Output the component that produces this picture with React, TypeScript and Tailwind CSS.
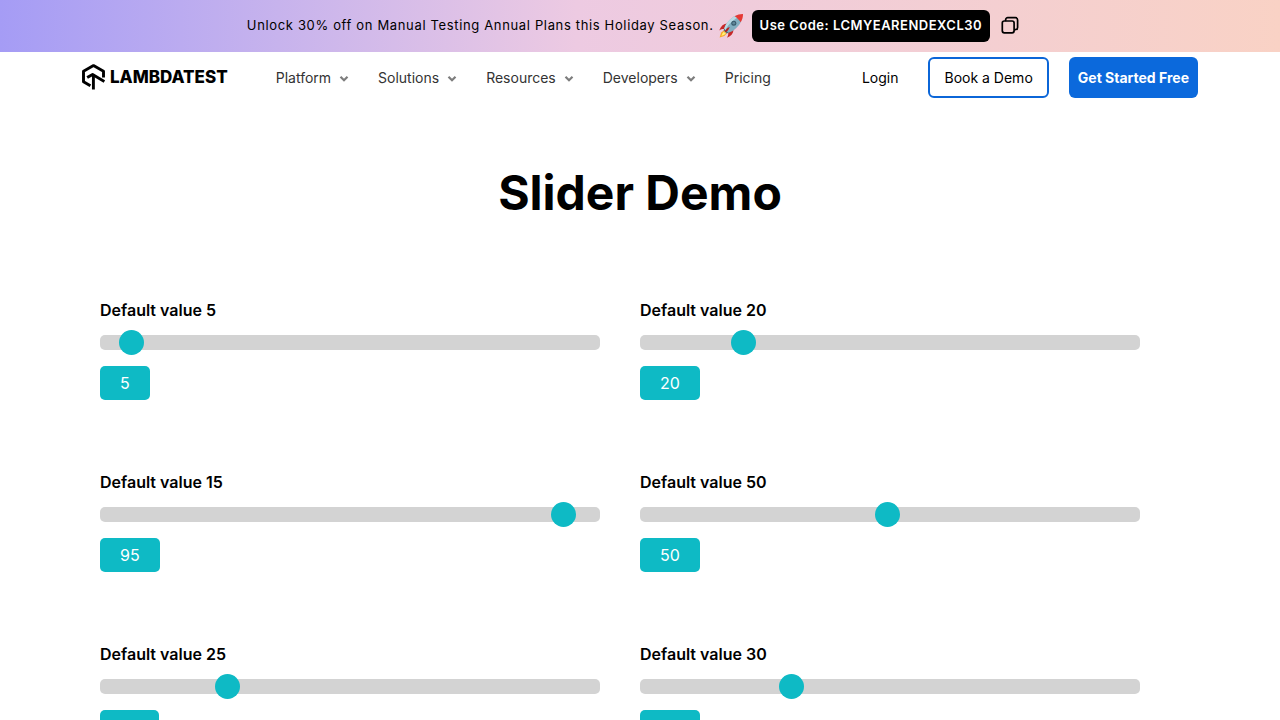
import { useId, useState } from "react";

const menus = ["Platform", "Solutions", "Resources", "Developers"];

const sliders = [
  { label: "Default value 5", initial: 5 },
  { label: "Default value 20", initial: 20 },
  { label: "Default value 15", initial: 95 },
  { label: "Default value 50", initial: 50 },
  { label: "Default value 25", initial: 25 },
  { label: "Default value 30", initial: 30 },
];

function Rocket() {
  return (
    <svg viewBox="0 0 26 26" className="ml-1 h-[26px] w-[26px]" aria-hidden="true">
      <path d="M7 16.5 3.2 19.5 1.6 24.6 6.4 23 9.8 19.2Z" fill="#f9a825" />
      <path d="M7 17.5 4.6 20 3.4 23 6.4 21.8 8.6 19.2Z" fill="#fff176" />
      <path d="M9.5 10.5C5.5 10.7 3 13 1.2 17.4 3.5 15.9 5.8 15.6 8 16.2Z" fill="#c62828" />
      <path d="M15.5 16.5C15.4 20.4 13.3 23 9 24.8 10.4 22.5 10.6 20.4 9.8 18Z" fill="#c62828" />
      <path d="M5.6 17.4 8.6 20.4 11 19.5 6.5 15Z" fill="#546e7a" />
      <path d="M6.2 15.5C7.6 11 12.3 5 18.2 2.6L23.4 7.8C21 13.8 15 18.4 10.5 19.8Z" fill="#82aec0" />
      <path d="M6.2 15.5C7.6 11 12.3 5 18.2 2.6L20 4.4C14.5 7 9.3 12.5 7.6 16.9Z" fill="#b9dae4" />
      <path d="M16.7 3.3C19.5 1.7 22.2.9 25 1 25.1 3.8 24.3 6.5 22.7 9.3 21 6.8 19.2 5 16.7 3.3Z" fill="#e53935" />
      <circle cx="15.8" cy="10.2" r="2.5" fill="#37596a" />
      <circle cx="15.8" cy="10.2" r="1.4" fill="#5f8799" />
      <path d="M6.4 19.6C7.3 17 9.2 15 11.7 14.1 11 16.7 9.1 18.7 6.4 19.6Z" fill="#b71c1c" />
    </svg>
  );
}

function Logo() {
  return (
    <a href="#" aria-label="LambdaTest" className="flex items-center gap-[5px] pb-[2px] text-black">
      <svg viewBox="0 0 23 26" className="h-[26px] w-[23px]" fill="none" stroke="currentColor" strokeWidth="2.9" strokeLinejoin="round" aria-hidden="true">
        <path d="M8.4 21.8 1.5 17.8V7.2L11.5 1.6 21.5 7.2V13.4" />
        <path d="M5.2 13.6 10.6 10.4 22.4 17.6" />
        <path d="M11.4 10.8V25.5" />
      </svg>
      <span className="font-[Inter,sans-serif] text-[17px] leading-6 font-extrabold">LAMBDATEST</span>
    </a>
  );
}

function Chevron() {
  return (
    <svg viewBox="0 0 10 8" className="mt-[3px] h-2 w-[10px]" fill="none" stroke="#7d7d7d" strokeWidth="2.2" aria-hidden="true">
      <path d="M1.5 1.8 5 5.3 8.5 1.8" />
    </svg>
  );
}

function SliderField({ label, initial }: { label: string; initial: number }) {
  const id = useId();
  const [value, setValue] = useState(initial);
  return (
    <div className="pr-10 pb-[70px]">
      <label htmlFor={id} className="block text-base leading-6 font-semibold">
        {label}
      </label>
      <input
        id={id}
        type="range"
        min={1}
        max={100}
        value={value}
        onChange={(e) => setValue(Number(e.target.value))}
        className="mt-[13px] block h-[15px] w-full cursor-pointer appearance-none rounded-[5px] bg-[#d3d3d3] outline-none [&::-webkit-slider-thumb]:h-[25px] [&::-webkit-slider-thumb]:w-[25px] [&::-webkit-slider-thumb]:appearance-none [&::-webkit-slider-thumb]:rounded-full [&::-webkit-slider-thumb]:bg-[#0ebac5]"
      />
      <output htmlFor={id} className="mt-4 inline-block rounded-[5px] bg-[#0ebac5] px-5 py-[5px] align-top text-base leading-6 text-white">
        {value}
      </output>
    </div>
  );
}

export default function App() {
  return (
    <div className="min-h-screen bg-white font-[Inter,sans-serif] text-black">
      <div className="flex h-[52px] items-center justify-center bg-linear-to-r from-[#a59cf5] via-[#edcae2] via-45% to-[#f9d2c5] pr-[14px]">
        <p className="pb-[2px] text-[13px] leading-5 tracking-wider">Unlock 30% off on Manual Testing Annual Plans this Holiday Season.</p>
        <Rocket />
        <span className="ml-2 rounded-md bg-black px-2 pt-[5px] pb-[7px] text-[13px] leading-5 font-semibold tracking-[0.5px] text-white">
          Use Code: LCMYEARENDEXCL30
        </span>
        <button type="button" aria-label="Copy code" className="ml-[11px] pb-[2px]">
          <svg viewBox="0 0 18 18" className="h-[18px] w-[18px]" fill="none" stroke="currentColor" strokeWidth="1.7" strokeLinecap="round" aria-hidden="true">
            <rect x="1.3" y="5" width="11.8" height="11.8" rx="2" />
            <path d="M4.6 4.4V3.9A2.2 2.2 0 0 1 6.8 1.7H14.4A2.2 2.2 0 0 1 16.6 3.9V11.4A2.2 2.2 0 0 1 14.4 13.6H13.8" />
          </svg>
        </button>
      </div>

      <header className="flex items-center justify-between px-[82px] py-[5px]">
        <div className="flex items-center">
          <Logo />
          <nav className="ml-12 flex items-center gap-[29px] text-sm text-[#333333]">
            {menus.map((name) => (
              <button key={name} type="button" className="flex items-center gap-2">
                {name}
                <Chevron />
              </button>
            ))}
            <a href="#">Pricing</a>
          </nav>
        </div>
        <div className="flex items-center text-sm">
          <a href="#" className="mr-[30px]">Login</a>
          <a href="#" className="mr-5 rounded-md border-2 border-[#0b66d8] px-[14px] py-[8px] leading-[21px]">Book a Demo</a>
          <a href="#" className="rounded-md bg-[#0b69dc] px-[9px] py-[10px] leading-[21px] font-bold text-white">Get Started Free</a>
        </div>
      </header>

      <main className="pt-[60px]">
        <h1 className="text-center text-5xl leading-[60px] font-bold">Slider Demo</h1>
        <section className="grid grid-cols-2 px-[100px] pt-[75px]">
          {sliders.map((s) => (
            <SliderField key={s.label} {...s} />
          ))}
        </section>
      </main>
    </div>
  );
}
